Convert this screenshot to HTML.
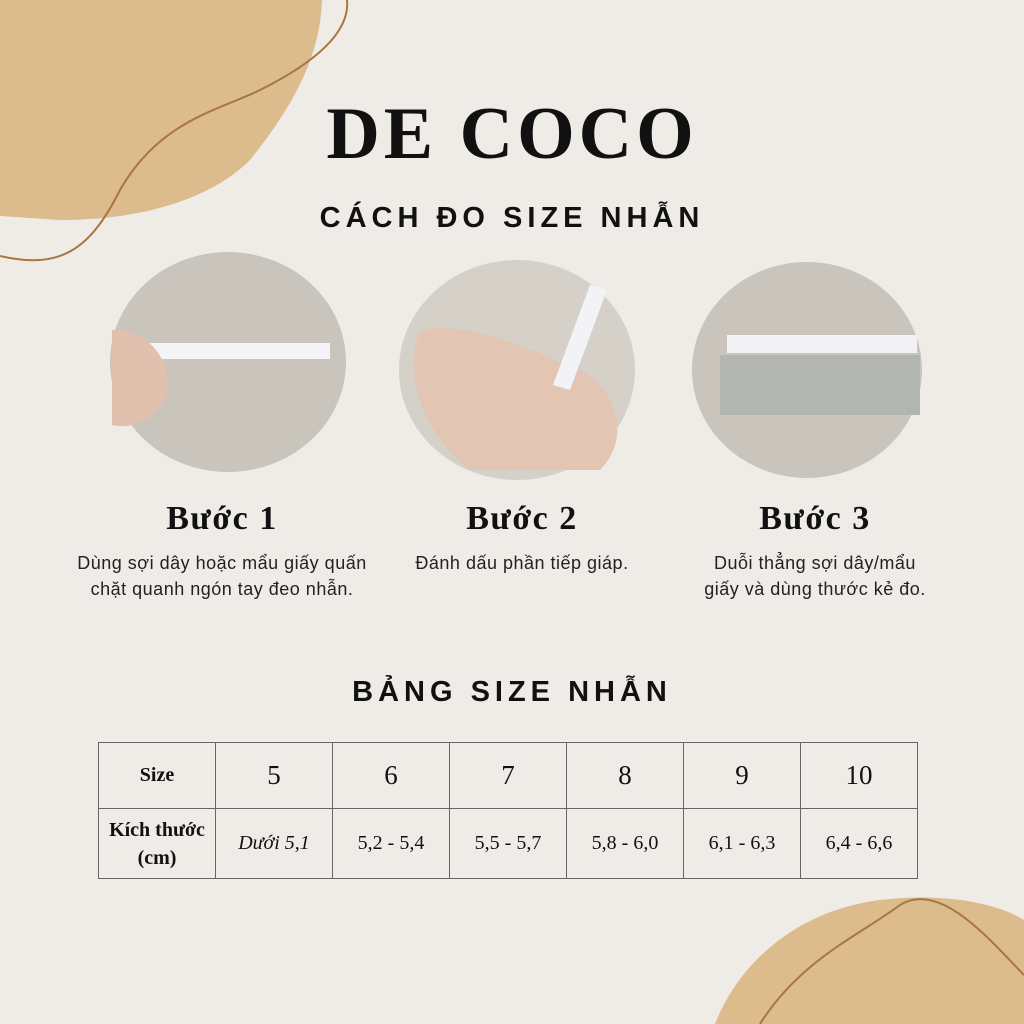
<!DOCTYPE html>
<html><head><meta charset="utf-8"><style>
body{margin:0;width:1024px;height:1024px;background:#efece7;position:relative;overflow:hidden;font-family:"Liberation Sans",sans-serif;color:#111}
.a{position:absolute;left:0;width:1024px;text-align:center}
.t{font-family:"Liberation Serif",serif;font-weight:bold}
.step{position:absolute;width:360px;text-align:center}
.step h2{margin:0;font-family:"Liberation Serif",serif;font-weight:bold;font-size:34px;letter-spacing:1.5px}
.step p{margin:12px 0 0;font-size:18px;line-height:26px;color:#222;letter-spacing:.5px}
table{position:absolute;left:98px;top:742px;border-collapse:collapse;font-family:"Liberation Serif",serif}
td{border:1.5px solid #666;width:116px;text-align:center;padding:0}
tr.r1 td{height:65px;font-size:27px}
tr.r2 td{height:69px;font-size:20px}
td.h{font-weight:bold;font-size:20px!important}
</style></head><body>
<svg width="1024" height="1024" style="position:absolute;left:0;top:0">
<path d="M0 0 L322 0 C320 60 290 110 250 160 C210 200 140 220 60 220 L0 216 Z" fill="#dcbb8d"/>
<path d="M0 256 C60 270 90 250 120 190 C160 120 220 110 260 90 C320 60 350 30 347 0" fill="none" stroke="#a8763e" stroke-width="2"/>
<path d="M715 1024 C740 960 800 910 880 900 C950 892 1000 905 1024 920 L1024 1024 Z" fill="#dcbb8d"/>
<path d="M760 1024 C800 960 860 935 900 905 C940 880 990 940 1024 975" fill="none" stroke="#a8763e" stroke-width="2"/>
<ellipse cx="228" cy="362" rx="118" ry="110" fill="#c9c5bd"/>
<rect x="120" y="343" width="210" height="16" fill="#f4f3f8"/>
<path d="M112 330 C150 330 170 360 168 390 C160 420 130 430 112 425 Z" fill="#e2c0ae"/>
<ellipse cx="517" cy="370" rx="118" ry="110" fill="#d5d1c9"/>
<path d="M420 330 C470 320 530 350 580 370 C620 390 630 440 600 470 L470 470 C430 440 400 380 420 330 Z" fill="#e3c5b3"/>
<path d="M590 285 L607 290 L570 390 L553 385 Z" fill="#f3f2f7"/>
<ellipse cx="807" cy="370" rx="115" ry="108" fill="#c9c5bc"/>
<rect x="727" y="335" width="190" height="18" fill="#f2f2f6"/>
<rect x="720" y="355" width="200" height="60" fill="#b3b5b0"/>
</svg>
<div class="a t" style="top:92px;font-size:74px;letter-spacing:4px">DE COCO</div>
<div class="a" style="top:202px;font-size:29px;letter-spacing:5px;font-weight:bold">CÁCH ĐO SIZE NHẪN</div>
<div class="step" style="left:42px;top:500px"><h2>Bước 1</h2><p>Dùng sợi dây hoặc mẩu giấy quấn<br>chặt quanh ngón tay đeo nhẫn.</p></div>
<div class="step" style="left:342px;top:500px"><h2>Bước 2</h2><p>Đánh dấu phần tiếp giáp.</p></div>
<div class="step" style="left:635px;top:500px"><h2>Bước 3</h2><p>Duỗi thẳng sợi dây/mẩu<br>giấy và dùng thước kẻ đo.</p></div>
<div class="a" style="top:676px;font-size:29px;letter-spacing:5px;font-weight:bold">BẢNG SIZE NHẪN</div>
<table>
<tr class="r1"><td class="h">Size</td><td>5</td><td>6</td><td>7</td><td>8</td><td>9</td><td>10</td></tr>
<tr class="r2"><td class="h" style="line-height:28px">Kích thước<br>(cm)</td><td style="font-style:italic">Dưới 5,1</td><td>5,2 - 5,4</td><td>5,5 - 5,7</td><td>5,8 - 6,0</td><td>6,1 - 6,3</td><td>6,4 - 6,6</td></tr>
</table>
</body></html>
